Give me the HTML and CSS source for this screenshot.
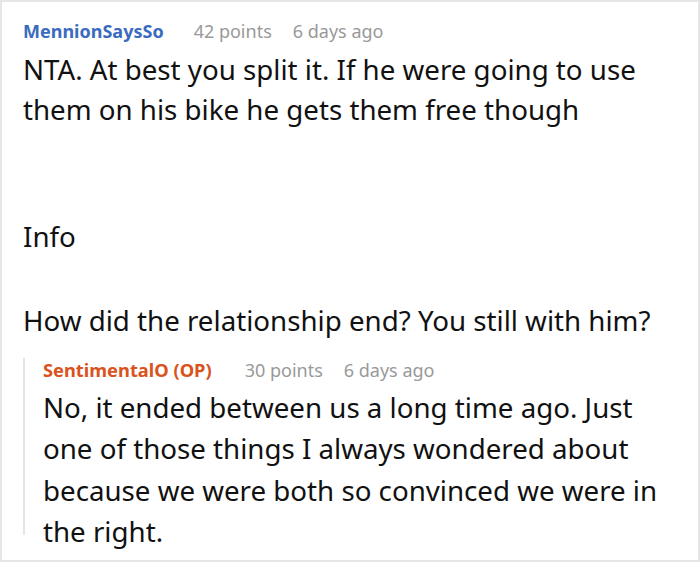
FILE: index.html
```html
<!DOCTYPE html>
<html>
<head>
<meta charset="utf-8">
<link rel="stylesheet" href="styles.css">
</head>
<body>
<div class="comment">
  <div class="meta">
    <span class="user">MennionSaysSo</span>
    <span class="info">42 points</span>
    <span class="info">6 days ago</span>
  </div>
  <div class="text">
    <p>NTA. At best you split it. If he were going to use them on his bike he gets them free though</p>
    <p class="gap">Info</p>
    <p>How did the relationship end? You still with him?</p>
  </div>
  <div class="reply">
    <div class="meta">
      <span class="user op">SentimentalO (OP)</span>
      <span class="info">30 points</span>
      <span class="info">6 days ago</span>
    </div>
    <div class="text">
      <p>No, it ended between us a long time ago. Just one of those things I always wondered about because we were both so convinced we were in the right.</p>
    </div>
  </div>
</div>
</body>
</html>
```
FILE: styles.css
```css
html, body {
  margin: 0;
  padding: 0;
  background: #fff;
}
body {
  font-family: "Noto Sans", "Open Sans", sans-serif;
  color: #111;
}
.comment {
  box-sizing: border-box;
  width: 700px;
  height: 562px;
  border: 2px solid #e6e6e6;
  padding: 17px 20px 0 21px;
  overflow: hidden;
}
.meta {
  display: flex;
  font-size: 18px;
  line-height: 24px;
  align-items: baseline;
}
.user {
  font-weight: 700;
  color: #3b6bc0;
  margin-right: 30px;
}
.info {
  color: #999;
  margin-right: 21px;
}
.user.op {
  color: #d9531e;
  font-size: 18.3px;
  margin-right: 33px;
}
.text {
  font-size: 27.7px;
  line-height: 40px;
  margin-top: 6px;
}
.text p {
  margin: 0;
}
.text p + p {
  margin-top: 44px;
}
.text p.gap {
  margin-top: 87px;
}
.reply {
  margin-top: 29px;
  border-left: 2px solid #e6e6e6;
  padding-left: 18px;
  height: 177px;
}
.reply .meta {
  margin-top: -11px;
}
.reply .text {
  line-height: 41.3px;
  margin-top: 5px;
}
```
